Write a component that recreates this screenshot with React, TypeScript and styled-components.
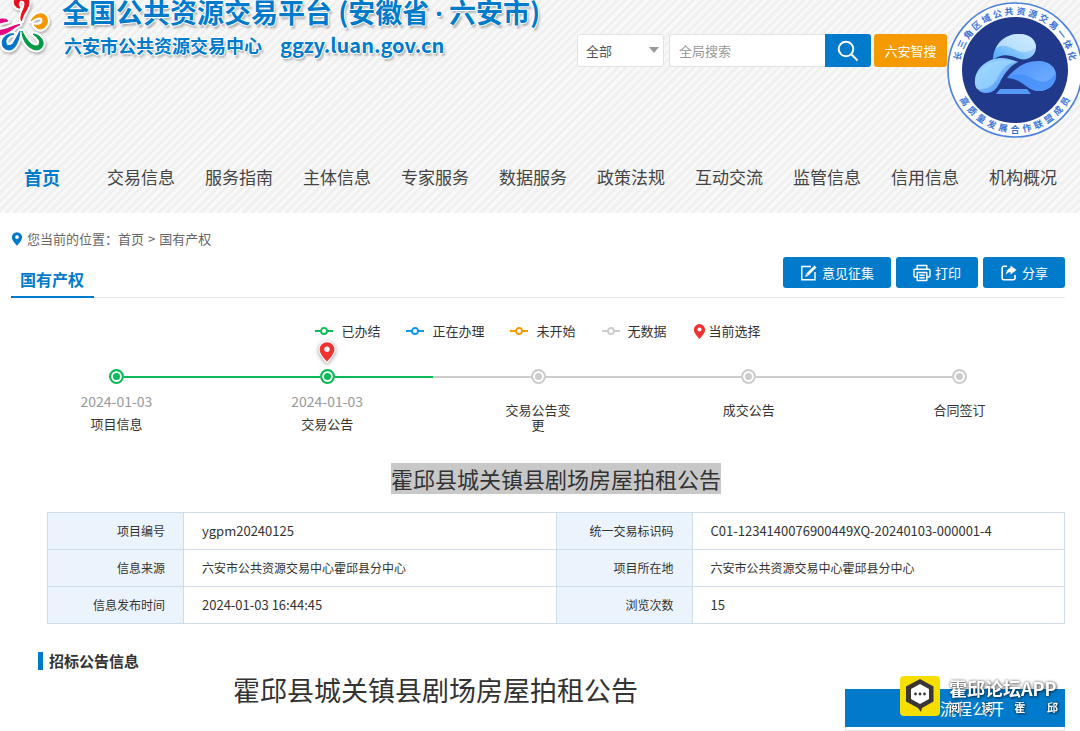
import React from "react";
import styled, { createGlobalStyle, css } from "styled-components";

const blue = "#007bcb";
const green = "#0abb57";
const grey = "#cccccc";

const GlobalStyle = createGlobalStyle`
  *, *::before, *::after { box-sizing: border-box; }
  body {
    margin: 0;
    background: #fff;
    color: #333;
    font-family: "Noto Sans CJK SC", "Noto Sans", sans-serif;
    font-size: 13px;
    line-height: 20px;
  }
  a { color: inherit; text-decoration: none; }
  button, input, select { font: inherit; margin: 0; }
`;

const Page = styled.div`
  min-height: 100vh;
  overflow: hidden;
`;

const Header = styled.header`
  background: repeating-linear-gradient(135deg, #f8f8f8 0 3px, #f0f0f0 3px 6px);
`;

const HeaderTop = styled.div`
  display: flex;
  align-items: flex-start;
  height: 158px;
`;

const BrandMark = styled.svg`
  flex: none;
  width: 62px;
  height: 60px;
  filter: drop-shadow(1px 2px 1px rgba(0, 0, 0, 0.25));
`;

const outline = css`
  color: ${blue};
  font-weight: 700;
  white-space: nowrap;
  text-shadow: 1px 0 #fff, -1px 0 #fff, 0 1px #fff, 0 -1px #fff, 2px 3px 2px rgba(0, 0, 0, 0.25);
`;

const Brand = styled.div`
  flex: 1;
  min-width: 0;
`;

const BrandTitle = styled.h1`
  ${outline}
  margin: 0;
  font-size: 27px;
  line-height: 24px;
`;

const MidDot = styled.span`
  margin: 0 6px;
  font-family: "Noto Sans", sans-serif;
`;

const BrandSub = styled.p`
  ${outline}
  display: flex;
  gap: 18px;
  margin: 7px 0 0 2px;
  font-size: 18px;
  line-height: 26px;
`;

const BrandDomain = styled.span`
  font-size: 20px;
`;

const SearchBar = styled.form`
  display: flex;
  flex: none;
  margin-top: 34px;
  height: 33px;
`;

const SelectBox = styled.div`
  position: relative;
  width: 87px;
  margin-right: 5px;
  &::after {
    content: "";
    position: absolute;
    right: 5px;
    top: 13px;
    border: 5px solid transparent;
    border-top: 6px solid #999;
    border-bottom: 0;
    pointer-events: none;
  }
`;

const Select = styled.select`
  appearance: none;
  width: 100%;
  height: 33px;
  padding: 0 8px;
  border: 1px solid #e2e2e2;
  border-radius: 3px;
  background: #fff;
  color: #555;
`;

const SearchInput = styled.input`
  width: 156px;
  padding: 0 9px;
  border: 1px solid #e2e2e2;
  border-right: 0;
  border-radius: 3px 0 0 3px;
  background: #fff;
  outline: 0;
  &::placeholder { color: #999; opacity: 1; }
`;

const SearchButton = styled.button`
  display: grid;
  place-items: center;
  width: 46px;
  padding: 0;
  border: 0;
  border-radius: 0 3px 3px 0;
  background: ${blue};
`;

const SmartButton = styled.button`
  width: 73px;
  margin-left: 3px;
  padding: 0;
  border: 0;
  border-radius: 3px;
  background: #f59a00;
  color: #fff;
`;

const Badge = styled.svg`
  flex: none;
  width: 133px;
  height: 140px;
`;

const Nav = styled.nav`
  display: flex;
  justify-content: space-between;
  align-items: center;
  height: 55px;
  padding: 0 23px 17px 24px;
`;

const NavLink = styled.a<{ $active?: boolean }>`
  font-size: ${(p) => (p.$active ? 18 : 17)}px;
  font-weight: ${(p) => (p.$active ? 700 : 400)};
  color: ${(p) => (p.$active ? blue : "#444")};
  margin-right: ${(p) => (p.$active ? 17 : 0)}px;
  line-height: 24px;
  white-space: nowrap;
`;

const Main = styled.main`
  padding: 16px 15px 0 11px;
`;

const Crumbs = styled.nav`
  display: flex;
  align-items: center;
  color: #666;
  svg { margin-right: 4px; }
  span { margin: 0 4px; }
`;

const TitleBar = styled.div`
  display: flex;
  justify-content: space-between;
  align-items: flex-start;
  height: 49px;
  padding-top: 8px;
  border-bottom: 1px solid #e5e5e5;
`;

const TabTitle = styled.h2`
  margin: 0;
  height: 41px;
  padding: 5px 10px 0 9px;
  border-bottom: 2px solid ${blue};
  color: ${blue};
  font-size: 16px;
  line-height: 34px;
`;

const Actions = styled.div`
  display: flex;
  gap: 5px;
`;

const ActionButton = styled.button`
  display: flex;
  align-items: center;
  gap: 4px;
  height: 31px;
  padding: 0 17px;
  border: 0;
  border-radius: 3px;
  background: ${blue};
  color: #fff;
`;

const Legend = styled.ul`
  display: flex;
  justify-content: center;
  gap: 26px;
  margin: 23px 0 0;
  padding: 0;
  list-style: none;
`;

const LegendItem = styled.li`
  display: flex;
  align-items: center;
  gap: 8px;
  &:last-child { gap: 3px; }
`;

const Steps = styled.ol`
  display: flex;
  margin: 0;
  padding: 0;
  list-style: none;
`;

const Step = styled.li`
  display: flex;
  flex: 1;
  flex-direction: column;
  align-items: center;
  height: 122px;
`;

const PinSlot = styled.div`
  height: 28px;
  filter: drop-shadow(0 1px 2px rgba(0, 0, 0, 0.4));
  svg { display: block; }
`;

const Rail = styled.div`
  display: flex;
  align-items: center;
  width: 100%;
  height: 15px;
`;

const Segment = styled.i<{ $color: string }>`
  flex: 1;
  height: 2px;
  background: ${(p) => p.$color};
`;

const Dot = styled.i<{ $color: string }>`
  width: 15px;
  height: 15px;
  border: 2px solid ${(p) => p.$color};
  border-radius: 50%;
  background: ${(p) => p.$color};
  box-shadow: inset 0 0 0 2px #fff;
`;

const StepDate = styled.time`
  margin-top: 6px;
  color: #999;
  font-size: 14px;
  line-height: 22px;
`;

const StepName = styled.span<{ $dated: boolean }>`
  width: 70px;
  margin-top: ${(p) => (p.$dated ? 4 : 18)}px;
  line-height: 15px;
  text-align: center;
`;

const NoticeTitle = styled.h2`
  margin: 0 0 0 36px;
  font-size: 22px;
  font-weight: 400;
  line-height: 31px;
  text-align: center;
  mark {
    display: inline-block;
    background: #c8c8c8;
    color: inherit;
  }
`;

const InfoTable = styled.table`
  width: calc(100% - 36px);
  margin: 18px 0 0 36px;
  border-collapse: collapse;
  table-layout: fixed;
  font-size: 12px;
  th, td {
    height: 37px;
    padding: 0 18px;
    border: 1px solid #cfdcea;
    font-weight: 400;
  }
  th {
    width: 136px;
    background: #ebf3fc;
    text-align: right;
  }
`;

const Code = styled.span`
  font-size: 13px;
`;

const SectionTitle = styled.h3`
  margin: 28px 0 0 27px;
  padding-left: 6px;
  border-left: 5px solid ${blue};
  font-size: 15px;
  font-weight: 700;
  line-height: 18px;
`;

const ArticleTitle = styled.h1`
  margin: 0;
  padding: 0 205px 0 0;
  font-size: 27px;
  font-weight: 400;
  line-height: 40px;
  text-align: center;
`;

const FlowPanel = styled.aside`
  position: fixed;
  right: 15px;
  bottom: 0;
  width: 220px;
  height: 42px;
  background: #fff;
  box-shadow: inset 0 0 0 1px #e5e5e5;
`;

const FlowButton = styled.button`
  display: block;
  width: 100%;
  height: 38px;
  padding: 0 0 0 34px;
  border: 0;
  background: ${blue};
  color: #fff;
  font-size: 16px;
`;

const ForumMark = styled.div`
  position: fixed;
  right: 22px;
  bottom: 15px;
  display: flex;
  gap: 9px;
  width: 158px;
  height: 40px;
  pointer-events: none;
`;

const ForumText = styled.div`
  flex: 1;
  color: #fff;
  white-space: nowrap;
  text-shadow: 0 0 3px rgba(0, 0, 0, 0.6), 1px 1px 3px rgba(0, 0, 0, 0.5);
`;

const ForumName = styled.strong`
  display: block;
  font-size: 18px;
  font-weight: 700;
  line-height: 24px;
`;

const ForumSlogan = styled.div`
  display: flex;
  justify-content: space-between;
  font-size: 11px;
  font-weight: 700;
  line-height: 14px;
`;

const PinIcon = ({ color, width, height, halo }: { color: string; width: number; height: number; halo?: boolean }) => (
  <svg width={width} height={height} viewBox="-1 -1 14 18" aria-hidden="true">
    <path
      d="M6 0a6 6 0 0 1 6 6c0 3.600-3.600 7-6 10C3.600 13 0 9.600 0 6a6 6 0 0 1 6-6z"
      fill={color}
      stroke={halo ? "#fff" : "none"}
      strokeWidth="2"
      paintOrder="stroke"
    />
    <circle cx="6" cy="5.800" r="2.200" fill="#fff" />
  </svg>
);

const LegendLine = ({ color }: { color: string }) => (
  <svg width="18" height="8" viewBox="0 0 18 8" aria-hidden="true">
    <path d="M0 4h6M12 4h6" stroke={color} strokeWidth="2" />
    <circle cx="9" cy="4" r="3" fill="#fff" stroke={color} strokeWidth="1.800" />
  </svg>
);

const EditIcon = () => (
  <svg width="18" height="18" viewBox="0 0 18 18" fill="none" stroke="#fff" strokeWidth="1.400" aria-hidden="true">
    <path d="M11 2.500H1.800v13.200h13.200V8" />
    <path d="M7.400 10.600 15.500 2.500" strokeWidth="2.800" />
    <path d="m5.200 12.800.8-3 2.200 2.200z" fill="#fff" stroke="none" />
  </svg>
);

const PrintIcon = () => (
  <svg width="18" height="18" viewBox="0 0 18 18" fill="none" stroke="#fff" strokeWidth="1.400" strokeLinejoin="round" aria-hidden="true">
    <path d="M4.200 5V1.500h9.600V5M4.200 13H2.200A1.200 1.200 0 0 1 1 11.800V6.400A1.200 1.200 0 0 1 2.200 5.200h13.600A1.200 1.200 0 0 1 17 6.400v5.400a1.200 1.200 0 0 1-1.200 1.200h-2" />
    <path d="M4.200 8.500h9.600v8H4.200zM6.300 11.200h5.400M6.300 13.800h5.400" />
  </svg>
);

const ShareIcon = () => (
  <svg width="18" height="18" viewBox="0 0 18 18" fill="none" stroke="#fff" strokeWidth="1.600" aria-hidden="true">
    <path d="M7 2.300H3.700a1.500 1.500 0 0 0-1.500 1.500v10.400a1.500 1.500 0 0 0 1.500 1.500h9.800a1.500 1.500 0 0 0 1.500-1.500V11" />
    <path d="M10.500 1.500 16.500 6l-6 4.500V8C8.500 8 7 9 6 11c0-4 1.800-6.500 4.500-7z" fill="#fff" stroke="none" />
  </svg>
);

const SearchIcon = () => (
  <svg width="22" height="22" viewBox="0 0 22 22" fill="none" stroke="#fff" strokeWidth="2" aria-hidden="true">
    <circle cx="9" cy="9" r="7.300" />
    <path d="m14.300 14.300 6.200 6.200" />
  </svg>
);

const petals = [
  { color: "#e60f1e", d: "M15-2C17-5 29-4 29 2C29 9 23 13 21.500 21C19 15 25 9 25 4C25 0 20-1 19 2C18 5 19 6 20 8C15 8 13 3 15-2Z" },
  { color: "#f39800", d: "M31 21C34 14 43 11 46.500 17C50 24 43 31 38 28.500C36 27.500 35 26 34 25C38 26 43 25 43 20C42 15 36 17 31 21Z" },
  { color: "#e4007f", d: "M-2 20C3 18 7 19 8 21C4 22 2 22 -2 24ZM20 24.500C13 25 8 30 -2 30.500V35C8 35 12 28 20 24.500Z" },
  { color: "#0073c8", d: "M20 31C19 42 15 50 9 50C2 50 0 41 5 36.500C8 34 11 33.500 14 34C9 35 5 39 6 43C7 47 12 46 14 42C16 38 18 35 20 31Z" },
  { color: "#009a44", d: "M22 31C22 42 30 50 37 50C44 49 45 41 40 37C38 35 35 34 33 34C36 37 40 39 39.500 43C39 47 34 47 30 43C26 39 24 35 22 31Z" },
];

const Emblem = () => (
  <BrandMark viewBox="0 0 62 60" aria-hidden="true">
    <g fill="#fff" stroke="#fff" strokeWidth="5" strokeLinejoin="round">
      {petals.map((p) => (
        <path key={p.color} d={p.d} />
      ))}
    </g>
    <g strokeWidth="1" strokeLinejoin="round">
      {petals.map((p) => (
        <path key={p.color} d={p.d} fill={p.color} stroke={p.color} />
      ))}
    </g>
  </BrandMark>
);

const ringText = (text: string, start: number, end: number, bottom: boolean) =>
  Array.from(text).map((ch, i, all) => {
    const angle = start + ((end - start) * i) / (all.length - 1);
    const rad = (angle * Math.PI) / 180;
    const x = 68 + 59 * Math.cos(rad);
    const y = 70 + 59 * Math.sin(rad);
    const turn = bottom ? angle - 90 : angle + 90;
    return (
      <text key={i} transform={`translate(${x} ${y}) rotate(${turn})`} textAnchor="middle" dominantBaseline="central">
        {ch}
      </text>
    );
  });

const AllianceBadge = () => (
  <Badge viewBox="0 0 133 140" role="img">
    <defs>
      <linearGradient id="top" x1="0" y1="1" x2="1" y2="0">
        <stop offset="0" stopColor="#4aa8f8" />
        <stop offset="1" stopColor="#cfeaff" />
      </linearGradient>
      <linearGradient id="left" x1="0" y1="0" x2="1" y2="1">
        <stop offset="0" stopColor="#a8dcff" />
        <stop offset="1" stopColor="#3f8df6" />
      </linearGradient>
      <linearGradient id="right" x1="0" y1="0" x2="1" y2="1">
        <stop offset="0" stopColor="#4b8ffb" />
        <stop offset="1" stopColor="#77b5ff" />
      </linearGradient>
    </defs>
    <circle cx="68" cy="70" r="67" fill="#fff" stroke="#4a80df" strokeWidth="1.600" />
    <circle cx="68" cy="70" r="53" fill="#20398b" />
    <g fontSize="9" fontWeight="700" fill="#3b74d8">
      {ringText("长三角区域公共资源交易一体化", 194, 346, false)}
      {ringText("高质量发展合作联盟成员", 148, 32, true)}
    </g>
    <path fill="url(#top)" d="M46 60c0-13 9-25 24-26 11-1 19 5 19 13 0 10-10 15-19 11-9-4-17-4-24 2z" />
    <path fill="#d2ecff" opacity=".65" d="M49 48c4-8 11-13 21-14 11-1 19 5 19 13-6 5-12 7-20 3-8-4-14-6-20-2z" />
    <path fill="url(#left)" d="M71 62c-8 4-13 11-17 18-4 9-8 13-15 13-7 0-12-6-11-14 2-14 18-24 34-20 4 1 6 2 9 3z" />
    <path fill="#9fd8ff" opacity=".7" d="M71 62c-12 1-16 7-20 15-4 9-11 13-21 12-3-4-3-10 1-16 7-10 24-17 40-11z" />
    <path fill="url(#right)" d="M60 78c8-10 18-17 31-17 12 0 18 7 18 14 0 9-7 16-17 16-13 0-15-13-32-13z" />
    <path fill="#418cf8" opacity=".7" d="M60 78c11-7 20-3 27 1 8 5 16 3 22-6 2 10-7 18-17 18-13 0-16-12-32-13z" />
    <path fill="#5599f5" d="M53 89h27l4 5H49z" />
  </Badge>
);

const navItems = ["首页", "交易信息", "服务指南", "主体信息", "专家服务", "数据服务", "政策法规", "互动交流", "监管信息", "信用信息", "机构概况"];

const legend = [
  { label: "已办结", color: green },
  { label: "正在办理", color: "#1296f0" },
  { label: "未开始", color: "#f59a00" },
  { label: "无数据", color: grey },
];

const steps: { name: string; date?: string; current?: boolean; left: string; right: string; color: string }[] = [
  { name: "项目信息", date: "2024-01-03", left: "transparent", right: green, color: green },
  { name: "交易公告", date: "2024-01-03", current: true, left: green, right: green, color: green },
  { name: "交易公告变更", left: grey, right: grey, color: grey },
  { name: "成交公告", left: grey, right: grey, color: grey },
  { name: "合同签订", left: grey, right: "transparent", color: grey },
];

export default function App() {
  return (
    <Page>
      <GlobalStyle />
      <Header>
        <HeaderTop>
          <Emblem />
          <Brand>
            <BrandTitle>
              全国公共资源交易平台 (安徽省<MidDot>·</MidDot>六安市)
            </BrandTitle>
            <BrandSub>
              六安市公共资源交易中心 <BrandDomain>ggzy.luan.gov.cn</BrandDomain>
            </BrandSub>
          </Brand>
          <SearchBar onSubmit={(e) => e.preventDefault()}>
            <SelectBox>
              <Select aria-label="搜索范围">
                <option>全部</option>
              </Select>
            </SelectBox>
            <SearchInput type="text" placeholder="全局搜索" aria-label="全局搜索" />
            <SearchButton type="submit" aria-label="搜索">
              <SearchIcon />
            </SearchButton>
            <SmartButton type="button">六安智搜</SmartButton>
          </SearchBar>
          <AllianceBadge />
        </HeaderTop>
        <Nav>
          {navItems.map((item, i) => (
            <NavLink key={item} href="#" $active={i === 0}>
              {item}
            </NavLink>
          ))}
        </Nav>
      </Header>

      <Main>
        <Crumbs>
          <PinIcon color={blue} width={12} height={16} />
          您当前的位置：<a href="#">首页</a>
          <span>&gt;</span>
          <a href="#">国有产权</a>
        </Crumbs>
        <TitleBar>
          <TabTitle>国有产权</TabTitle>
          <Actions>
            <ActionButton type="button">
              <EditIcon />
              意见征集
            </ActionButton>
            <ActionButton type="button">
              <PrintIcon />
              打印
            </ActionButton>
            <ActionButton type="button">
              <ShareIcon />
              分享
            </ActionButton>
          </Actions>
        </TitleBar>

        <Legend>
          {legend.map((l) => (
            <LegendItem key={l.label}>
              <LegendLine color={l.color} />
              {l.label}
            </LegendItem>
          ))}
          <LegendItem>
            <PinIcon color="#f03232" width={13} height={17} />
            当前选择
          </LegendItem>
        </Legend>

        <Steps>
          {steps.map((s) => (
            <Step key={s.name}>
              <PinSlot>{s.current && <PinIcon color="#f03232" width={18} height={22} halo />}</PinSlot>
              <Rail>
                <Segment $color={s.left} />
                <Dot $color={s.color} />
                <Segment $color={s.right} />
              </Rail>
              {s.date && <StepDate>{s.date}</StepDate>}
              <StepName $dated={Boolean(s.date)}>{s.name}</StepName>
            </Step>
          ))}
        </Steps>

        <NoticeTitle>
          <mark>霍邱县城关镇县剧场房屋拍租公告</mark>
        </NoticeTitle>

        <InfoTable>
          <tbody>
            <tr>
              <th scope="row">项目编号</th>
              <td><Code>ygpm20240125</Code></td>
              <th scope="row">统一交易标识码</th>
              <td><Code>C01-1234140076900449XQ-20240103-000001-4</Code></td>
            </tr>
            <tr>
              <th scope="row">信息来源</th>
              <td>六安市公共资源交易中心霍邱县分中心</td>
              <th scope="row">项目所在地</th>
              <td>六安市公共资源交易中心霍邱县分中心</td>
            </tr>
            <tr>
              <th scope="row">信息发布时间</th>
              <td><Code>2024-01-03 16:44:45</Code></td>
              <th scope="row">浏览次数</th>
              <td><Code>15</Code></td>
            </tr>
          </tbody>
        </InfoTable>

        <SectionTitle>招标公告信息</SectionTitle>
        <ArticleTitle>霍邱县城关镇县剧场房屋拍租公告</ArticleTitle>
      </Main>

      <FlowPanel>
        <FlowButton type="button">流程公开</FlowButton>
      </FlowPanel>
      <ForumMark>
        <svg width="40" height="40" viewBox="0 0 40 40" aria-hidden="true">
          <rect width="40" height="40" rx="4" fill="#f5de00" />
          <path fill="#3b3536" d="M20 3l13.500 7.500v15L22 32l-1 4-3-4L6 25.500v-15z" />
          <path fill="#fff" d="M20 8l9 5v10l-9 5-9-5V13z" />
          <g fill="#3b3536">
            <circle cx="15.500" cy="18" r="1.400" />
            <circle cx="20" cy="18" r="1.400" />
            <circle cx="24.500" cy="18" r="1.400" />
          </g>
        </svg>
        <ForumText>
          <ForumName>霍邱论坛APP</ForumName>
          <ForumSlogan>
            <span>阅</span>
            <span>读</span>
            <span>霍</span>
            <span>邱</span>
          </ForumSlogan>
        </ForumText>
      </ForumMark>
    </Page>
  );
}
